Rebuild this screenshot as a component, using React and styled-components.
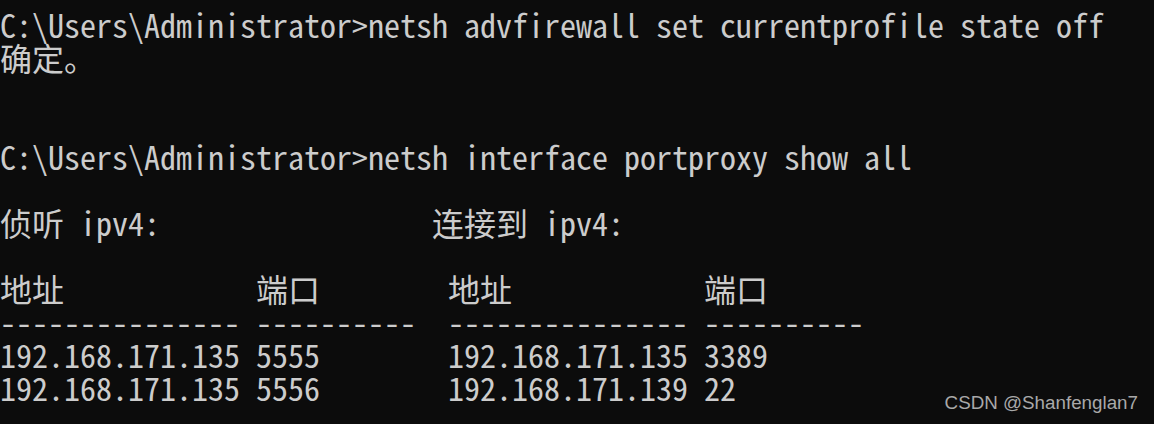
import React from "react"
import styled, { createGlobalStyle } from "styled-components"

const GlobalStyle = createGlobalStyle`
  html, body {
    margin: 0;
    padding: 0;
    background: #0c0c0c;
  }
`

const lines = [
  "C:\\Users\\Administrator>netsh advfirewall set currentprofile state off",
  "确定。",
  "",
  "",
  "C:\\Users\\Administrator>netsh interface portproxy show all",
  "",
  "侦听 ipv4:                 连接到 ipv4:",
  "",
  "地址            端口        地址            端口",
  "--------------- ----------  --------------- ----------",
  "192.168.171.135 5555        192.168.171.135 3389",
  "192.168.171.135 5556        192.168.171.139 22",
]

const Console = () => (
  <Screen>
    <GlobalStyle />
    <Output>
      {lines.map((text, i) => (
        <Line key={i}>{text}</Line>
      ))}
    </Output>
    <Watermark>CSDN @Shanfenglan7</Watermark>
  </Screen>
)

export default Console

const Screen = styled.div`
  position: relative;
  width: 1154px;
  height: 424px;
  overflow: hidden;
  background: #0c0c0c;
`

const Output = styled.div`
  display: flex;
  flex-direction: column;
  padding-top: 8px;
  font-family: "Noto Sans Mono CJK SC", "Liberation Mono", "Noto Sans CJK SC", monospace;
  font-size: 32px;
  color: #cccccc;
`

const Line = styled.div`
  height: 33px;
  line-height: 33px;
  white-space: pre;
`

const Watermark = styled.div`
  position: absolute;
  right: 16px;
  bottom: 10px;
  font-family: "Liberation Sans", Arial, sans-serif;
  font-size: 18.8px;
  color: #a9a9a9;
`
